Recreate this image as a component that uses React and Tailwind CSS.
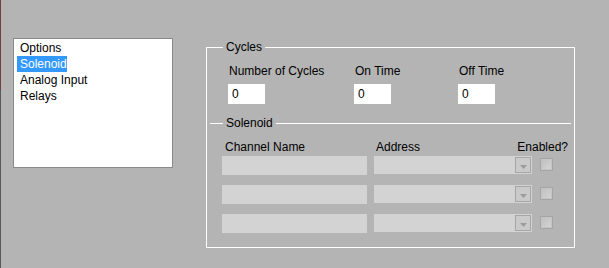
import React from 'react';

const rows = [0, 1, 2];

const Dropdown = () => (
  <div className="flex h-[18px] w-[158px] justify-end bg-[#d3d3d3] pt-[1px] pr-[1px]">
    <div className="flex h-[16px] w-[16px] items-end justify-center border border-[#a6a6a6] bg-[#cacaca] pb-[3px]">
      <svg width="7" height="4" viewBox="0 0 7 4">
        <path d="M0 0h7L3.5 4z" fill="#9c9c9c" />
      </svg>
    </div>
  </div>
);

const Checkbox = () => (
  <div className="mt-[2px] flex h-[13px] w-[13px] items-center justify-center border border-[#a5a5a5] bg-[#c4c4c4]">
    <div className="h-[9px] w-[9px] bg-[linear-gradient(135deg,#c0c0c0,#d4d4d4)]" />
  </div>
);

const App = () => {
  return (
    <div className="flex h-[268px] w-[609px] bg-[#b4b4b4] font-['Liberation_Sans',Arial,sans-serif] text-[12px] leading-[14px] text-black">
      <div className="flex w-[1px] flex-col">
        <div className="h-[90px] bg-[#6e4040]" />
        <div className="flex-1 bg-[#5c5858]" />
      </div>

      <div className="ml-[12px] mt-[38px] h-[130px] w-[160px] border border-[#8a8a8a] bg-white pl-[3px] pt-[1px] leading-[16px]">
        <div className="px-[3px]">Options</div>
        <div className="w-[50px] bg-[#3399ff] px-[3px] text-white">Solenoid</div>
        <div className="px-[3px]">Analog Input</div>
        <div className="px-[3px]">Relays</div>
      </div>

      <fieldset className="ml-[33px] mt-[40px] h-[208px] w-[369px] border border-white">
        <legend className="ml-[16px] px-[3px] leading-[14px]">Cycles</legend>

        <div className="mt-[10px] flex pl-[21px]">
          <div className="w-[126px]">
            <div className="pl-[1px]">Number of Cycles</div>
            <div className="mt-[6px] h-[20px] w-[37px] bg-white pl-[4px] leading-[20px]">0</div>
          </div>
          <div className="w-[104px]">
            <div className="pl-[1px]">On Time</div>
            <div className="mt-[6px] h-[20px] w-[37px] bg-white pl-[4px] leading-[20px]">0</div>
          </div>
          <div>
            <div className="pl-[1px]">Off Time</div>
            <div className="mt-[6px] h-[20px] w-[37px] bg-white pl-[4px] leading-[20px]">0</div>
          </div>
        </div>

        <div className="mx-[3px] mt-[12px] flex items-center">
          <div className="h-[1px] w-[13px] bg-white" />
          <span className="px-[3px]">Solenoid</span>
          <div className="h-[1px] flex-1 bg-white" />
        </div>

        <div className="mt-[10px] flex pl-[15px] pr-[6px]">
          <div className="w-[152px] pl-[3px]">Channel Name</div>
          <div className="pl-[2px]">Address</div>
          <div className="ml-auto">Enabled?</div>
        </div>

        <div className="mt-[2px] flex flex-col gap-[10px] pl-[15px]">
          {rows.map((row) => (
            <div key={row} className="flex items-start">
              <div className="h-[19px] w-[145px] bg-[#d3d3d3]" />
              <div className="ml-[7px]">
                <Dropdown />
              </div>
              <div className="ml-[8px]">
                <Checkbox />
              </div>
            </div>
          ))}
        </div>
      </fieldset>
    </div>
  );
};

export default App;
